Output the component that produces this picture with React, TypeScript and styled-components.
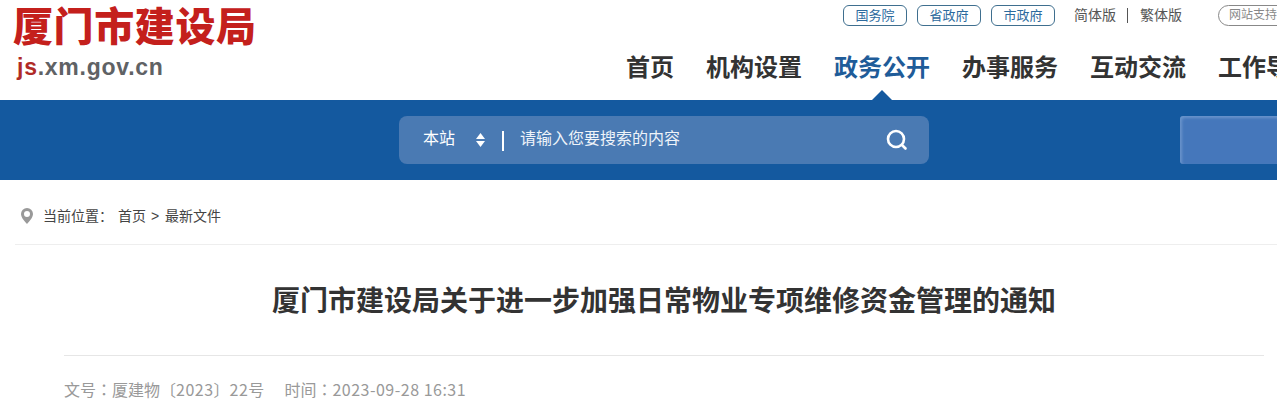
import React from "react";
import styled, { createGlobalStyle } from "styled-components";

const Global = createGlobalStyle`
  html, body { margin: 0; padding: 0; background: #fff; overflow: hidden; }
  body { font-family: "Liberation Sans", "Noto Sans CJK SC", sans-serif; }
  * { box-sizing: border-box; }
`;
const Page = styled.div`width: 1277px; height: 415px; overflow: hidden;`;
const Header = styled.header`display: flex; height: 100px; width: 1277px;`;
const Brand = styled.div`width: 626px; flex: none; padding: 1px 0 0 13px;`;
const BrandName = styled.div`
  font-family: "Noto Sans CJK SC", sans-serif; font-weight: 900; font-size: 40px; line-height: 46px;
  letter-spacing: 0.6px; color: #c4201c; white-space: nowrap;
`;
const BrandUrl = styled.div`
  margin: 7px 0 0 4px; font-size: 23px; line-height: 26px; font-weight: 700; color: #5f6265; letter-spacing: 0.75px;
  span { color: #b02a26; }
`;
const HeadRight = styled.div`flex: none; display: flex; flex-direction: column; width: 800px;`;
const TopBar = styled.div`display: flex; align-items: center; height: 21px; margin-top: 5px; padding-left: 217px;`;
const Pill = styled.a`
  flex: none; width: 64px; height: 21px; margin-right: 10px; border: 1px solid #3f6f8f; border-radius: 6px;
  font-size: 13px; line-height: 19px; text-align: center; color: #2c6a9e;
`;
const Lang = styled.a`font-size: 14px; color: #555; line-height: 21px; white-space: nowrap;`;
const LangGroup = styled.div`display: flex; align-items: center; margin-left: 9px;`;
const LangBar = styled.i`width: 1px; height: 15px; background: #555; margin: 0 12px 0 11px;`;
const Support = styled.a`
  flex: none; margin-left: 36px; width: 110px; height: 21px; padding-left: 10px; border: 1px solid #888; border-radius: 11px;
  font-size: 12px; line-height: 19px; color: #888; white-space: nowrap;
`;
const Nav = styled.nav`display: flex; gap: 32px; margin-top: 26px; white-space: nowrap;`;
const NavItem = styled.a<{ $active?: boolean }>`
  position: relative; flex: none; height: 48px; font-size: 24px; line-height: 32px; font-weight: 700;
  color: ${(p) => (p.$active ? "#1f5c99" : "#333")};
  ${(p) => p.$active && `&::after {
    content: ""; position: absolute; left: 37px; bottom: -1px; width: 0; height: 0;
    border-left: 11px solid transparent; border-right: 11px solid transparent; border-bottom: 11px solid #14599f;
  }`}
`;
const Band = styled.div`
  position: relative; height: 80px; background: #14599f; display: flex; align-items: center; padding-left: 399px;
`;
const Search = styled.div`
  width: 530px; height: 48px; border-radius: 8px; background: #4a7ab3; display: flex; align-items: center;
  padding: 0 21px 0 24px; color: #fff;
`;
const Scope = styled.span`font-size: 16px; line-height: 20px; width: 52px; flex: none; margin-top: -3px;`;
const Updown = styled.svg`width: 11px; height: 16px; flex: none;`;
const SearchBar = styled.i`width: 2px; height: 20px; background: #fff; margin: 0 16px -1px 16px; flex: none;`;
const Placeholder = styled.span`font-size: 16px; line-height: 20px; flex: 1; color: #eef3f9; margin-top: -3px;`;
const Patch = styled.div`
  position: absolute; left: 1180px; top: 16px; width: 97px; height: 48px; background: #4577bb; border-radius: 3px 0 0 3px;
  box-shadow: inset 2px 2px 3px rgba(150, 185, 225, 0.45);
`;
const Crumbs = styled.div`
  margin: 0 0 0 15px; height: 65px; border-bottom: 1px solid #eee; display: flex; align-items: center; padding: 8px 0 0 6px;
  font-size: 14px; line-height: 20px; color: #444; white-space: nowrap;
`;
const CrumbLabel = styled.span`margin-left: 10px; width: 75px; flex: none;`;
const CrumbSep = styled.span`margin: 0 6px 0 5px; width: 8px; flex: none; text-align: center;`;
const Title = styled.h1`
  margin: 39px 0 0; text-align: center; font-size: 28px; line-height: 36px; font-weight: 700; color: #333; padding-left: 51px; white-space: nowrap;
`;
const Meta = styled.div`
  display: flex; margin: 35px 13px 0 64px; border-top: 1px solid #e6e6e6; padding-top: 22px;
  font-family: "Noto Sans CJK SC", sans-serif; font-size: 16px; line-height: 22px; color: #999; white-space: pre;
`;
const MetaItem = styled.span`margin-right: 20px;`;
const Colon = styled.span`font-family: "Noto Sans CJK TC", sans-serif;`;
const Digits = styled.span`letter-spacing: 0.5px;`;

export default function App() {
  return (
    <Page>
      <Global />
      <Header>
        <Brand>
          <BrandName>厦门市建设局</BrandName>
          <BrandUrl><span>js</span>.xm.gov.cn</BrandUrl>
        </Brand>
        <HeadRight>
          <TopBar>
            <Pill>国务院</Pill>
            <Pill>省政府</Pill>
            <Pill>市政府</Pill>
            <LangGroup>
              <Lang>简体版</Lang>
              <LangBar />
              <Lang>繁体版</Lang>
            </LangGroup>
            <Support>网站支持IPv6</Support>
          </TopBar>
          <Nav>
            <NavItem>首页</NavItem>
            <NavItem>机构设置</NavItem>
            <NavItem $active>政务公开</NavItem>
            <NavItem>办事服务</NavItem>
            <NavItem>互动交流</NavItem>
            <NavItem>工作导航</NavItem>
          </Nav>
        </HeadRight>
      </Header>
      <Band>
        <Search>
          <Scope>本站</Scope>
          <Updown viewBox="0 0 11 16" fill="#fff">
            <path d="M5.5 1 10 7H1z" />
            <path d="M5.500 15 10 9H1z" />
          </Updown>
          <SearchBar />
          <Placeholder>请输入您要搜索的内容</Placeholder>
          <svg width="22" height="22" viewBox="0 0 22 22" fill="none" stroke="#fff" strokeWidth="2.6" strokeLinecap="round">
            <circle cx="10" cy="10" r="8" />
            <path d="M16 16 19.500 19.500" />
          </svg>
        </Search>
        <Patch />
      </Band>
      <Crumbs>
        <svg width="12" height="16" viewBox="0 0 12 16">
          <path fillRule="evenodd" fill="#999" d="M6 0a6 6 0 0 1 6 6c0 3.600-4 7.800-6 10C4 13.800 0 9.600 0 6a6 6 0 0 1 6-6zm0 3a3 3 0 1 0 0 6 3 3 0 0 0 0-6z" />
        </svg>
        <CrumbLabel>当前位置：</CrumbLabel>
        <span>首页</span>
        <CrumbSep>&gt;</CrumbSep>
        <span>最新文件</span>
      </Crumbs>
      <Title>厦门市建设局关于进一步加强日常物业专项维修资金管理的通知</Title>
      <Meta>
        <MetaItem>文号<Colon>：</Colon>厦建物〔<Digits>2023</Digits>〕<Digits>22</Digits>号</MetaItem>
        <span>时间<Colon>：</Colon><Digits>2023-09-28 16:31</Digits></span>
      </Meta>
    </Page>
  );
}
